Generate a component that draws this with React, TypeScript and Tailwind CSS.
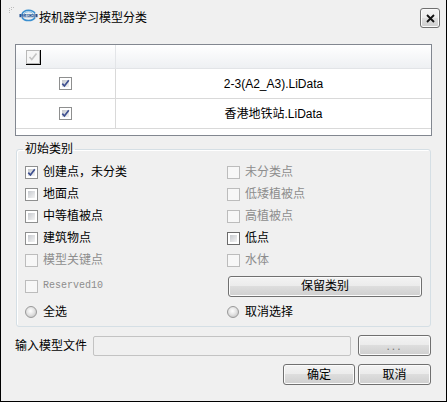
import React from "react";

const FONT = { fontFamily: '"Liberation Sans", "Noto Sans CJK SC", sans-serif' };

function CheckBox({ checked = false, disabled = false, hot = false }: { checked?: boolean; disabled?: boolean; hot?: boolean }) {
  if (disabled) {
    return <span className="w-[13px] h-[13px] border border-[#bcbcbc] bg-[#f7f7f7] shrink-0 block" />;
  }
  return (
    <span
      className={
        hot
          ? "relative flex w-[13px] h-[13px] border border-[#6b6b6b] bg-white p-[2px] shrink-0"
          : "relative flex w-[13px] h-[13px] border border-[#8e8f8f] bg-white p-[2px] shrink-0"
      }
    >
      <span className="flex-1 bg-[linear-gradient(135deg,#c6c9ce,#f4f4f4)]" />
      {checked && (
        <svg className="absolute left-0 top-0" width="11" height="11" viewBox="0 0 11 11">
          <path d="M2.3 5.6 L4.4 8 L8.8 2.2" stroke="#3d4f8f" strokeWidth="1.7" fill="none" />
        </svg>
      )}
    </span>
  );
}

function Radio() {
  return (
    <span className="w-[12px] h-[12px] rounded-full border border-[#999] bg-[radial-gradient(circle_at_45%_40%,#ffffff_0%,#e4e4e4_45%,#b9b9b9_100%)] shrink-0 block" />
  );
}

function Btn({ children, className = "" }: { children: React.ReactNode; className?: string }) {
  return (
    <div
      className={
        "flex items-center justify-center rounded-[3px] border border-[#707070] bg-[linear-gradient(to_bottom,#f3f3f3_0%,#ebebeb_50%,#dddddd_50%,#cfcfcf_100%)] shadow-[inset_0_0_0_1px_#fbfbfb] text-[12px] leading-[14px] text-black " +
        className
      }
    >
      {children}
    </div>
  );
}

function Item({ label, checked, disabled, hot }: { label: string; checked?: boolean; disabled?: boolean; hot?: boolean }) {
  return (
    <div className="flex items-center h-[22px]">
      <CheckBox checked={checked} disabled={disabled} hot={hot} />
      <span className={disabled ? "ml-[5px] text-[12px] leading-[14px] text-[#8d8d8d]" : "ml-[5px] text-[12px] leading-[14px] text-black"}>
        {label}
      </span>
    </div>
  );
}

function Logo() {
  return (
    <svg width="19" height="13" viewBox="0 0 19 13" className="block">
      <path d="M3 5 A7 5.5 0 0 1 16 4.5" stroke="#3a8fd0" strokeWidth="1.6" fill="none" />
      <path d="M5 4.8 A5 3.5 0 0 1 14 4.6" stroke="#7dbbe6" strokeWidth="1" fill="none" />
      <path d="M3 8.3 A7 5 0 0 0 16 8.5" stroke="#3a8fd0" strokeWidth="1.6" fill="none" />
      <rect x="0.5" y="5" width="18" height="3.2" fill="#1f4f8f" />
      <text x="9.5" y="7.6" textAnchor="middle" fontSize="2.8" fill="#ffffff" fontFamily="Liberation Sans, sans-serif">LIDARCHIS</text>
    </svg>
  );
}

export default function App() {
  return (
    <div className="w-[447px] h-[402px] bg-[#f0f0f0] border-l border-r border-b border-black flex flex-col" style={FONT}>
      {/* Title bar */}
      <div className="h-[44px] flex items-start pl-[8px] pr-[6px] shrink-0">
        <svg width="6" height="8" viewBox="0 0 6 8" className="mt-[7px] block">
          <rect x="0" y="1" width="1" height="1" fill="#bdbdbd" />
          <rect x="2" y="0" width="1" height="1" fill="#bdbdbd" />
          <rect x="4" y="0" width="1" height="1" fill="#bdbdbd" />
          <rect x="0" y="3" width="1" height="1" fill="#bdbdbd" />
          <rect x="2" y="2" width="1" height="1" fill="#bdbdbd" />
          <rect x="0" y="5" width="1" height="1" fill="#bdbdbd" />
        </svg>
        <div className="ml-[4px] mt-[9px]">
          <Logo />
        </div>
        <div className="ml-[1px] mt-[8px] h-[20px] flex items-center text-[12px] leading-[14px] text-black">按机器学习模型分类</div>
        <div className="ml-auto mt-[8px]">
          <Btn className="w-[20px] h-[20px] !text-[13px] font-bold">
            <svg width="9" height="9" viewBox="0 0 9 9">
              <path d="M1 1 L8 8 M8 1 L1 8" stroke="#111" strokeWidth="1.8" />
            </svg>
          </Btn>
        </div>
      </div>

      <div className="px-[14px] flex flex-col">
        {/* Table */}
        <div className="h-[92px] border border-[#828790] bg-white flex flex-col">
          <div className="h-[24px] flex bg-[linear-gradient(to_bottom,#ffffff,#eef0f3)] border-b border-[#e2e4e7]">
            <div className="w-[100px] border-r border-[#e3e5e8] pl-[10px] pt-[5px]">
              <div className="w-[15px] h-[15px] border-r border-b border-black">
                <div className="relative w-[14px] h-[14px] border border-[#b8b8b8] bg-[#f6f6f6]">
                  <svg className="absolute left-0 top-0" width="12" height="12" viewBox="0 0 12 12">
                    <path d="M2.5 6 L4.8 8.6 L9.5 2.6" stroke="#c4c4c4" strokeWidth="1.6" fill="none" />
                  </svg>
                </div>
              </div>
            </div>
            <div className="flex-1" />
          </div>
          {["2-3(A2_A3).LiData", "香港地铁站.LiData"].map((t) => (
            <div key={t} className="h-[30px] flex border-b border-[#d9d9d9]">
              <div className="w-[100px] border-r border-[#d9d9d9] flex items-center justify-center">
                <CheckBox checked />
              </div>
              <div className="flex-1 flex items-center justify-center text-[12px] leading-[14px] text-black">{t}</div>
            </div>
          ))}
        </div>

        {/* Group box */}
        <fieldset className="mx-[1px] mt-[6px] border border-[#d5dfe5] rounded-[3px] pl-[8px] pr-[8px] pt-[5px] pb-[3px] shadow-[inset_1px_1px_0_#ffffff]">
          <legend className="-ml-[2px] px-[2px] text-[12px] leading-[14px] text-black">初始类别</legend>
          <div className="grid grid-cols-[202px_1fr]">
            <Item label="创建点，未分类" checked />
            <Item label="未分类点" disabled />
            <Item label="地面点" />
            <Item label="低矮植被点" disabled />
            <Item label="中等植被点" />
            <Item label="高植被点" disabled />
            <Item label="建筑物点" />
            <Item label="低点" hot />
            <Item label="模型关键点" disabled />
            <Item label="水体" disabled />
            <div className="flex items-center h-[22px] mt-[4px]">
              <CheckBox disabled />
              <span className="ml-[5px] text-[10px] leading-[12px] text-[#8d8d8d]" style={{ fontFamily: '"Liberation Mono", monospace' }}>
                Reserved10
              </span>
            </div>
            <div className="flex items-center h-[22px] mt-[4px] pl-[1px]">
              <Btn className="w-[194px] h-[21px]">保留类别</Btn>
            </div>
            <div className="flex items-center h-[22px] mt-[4px]">
              <Radio />
              <span className="ml-[6px] text-[12px] leading-[14px] text-black">全选</span>
            </div>
            <div className="flex items-center h-[22px] mt-[4px]">
              <Radio />
              <span className="ml-[6px] text-[12px] leading-[14px] text-black">取消选择</span>
            </div>
          </div>
        </fieldset>

        {/* Model file row */}
        <div className="mt-[8px] flex items-center h-[21px]">
          <span className="text-[12px] leading-[14px] text-black w-[78px]">输入模型文件</span>
          <div className="w-[258px] h-[20px] border border-[#c3c3c3] rounded-[2px] bg-[#f0f0f0]" />
          <Btn className="ml-[7px] w-[73px] h-[21px] !text-[#777] tracking-[2px]">...</Btn>
        </div>

        {/* OK / Cancel */}
        <div className="mt-[8px] flex justify-end pr-[1px]">
          <Btn className="w-[72px] h-[21px]">确定</Btn>
          <Btn className="ml-[3px] w-[73px] h-[21px]">取消</Btn>
        </div>
      </div>
    </div>
  );
}
